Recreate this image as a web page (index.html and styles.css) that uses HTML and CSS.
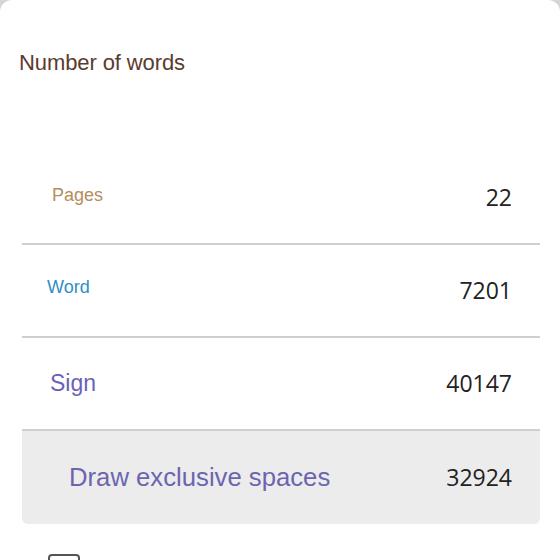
FILE: index.html
```html
<!DOCTYPE html>
<html>
<head>
<meta charset="utf-8">
<link rel="stylesheet" href="styles.css">
</head>
<body>
<div class="dialog">
  <h1 class="title">Number of words</h1>
  <div class="stats">
    <div class="row">
      <span class="label pages">Pages</span>
      <span class="num">22</span>
    </div>
    <div class="row">
      <span class="label word">Word</span>
      <span class="num">7201</span>
    </div>
    <div class="row">
      <span class="label sign">Sign</span>
      <span class="num">40147</span>
    </div>
    <div class="row shaded">
      <span class="label draw">Draw exclusive spaces</span>
      <span class="num">32924</span>
    </div>
  </div>
  <label class="check">
    <span class="box"></span>
    <span class="check-text">Include textboxes, footnotes and endnotes</span>
  </label>
</div>
</body>
</html>
```

FILE: styles.css
```css
html {
  background: #d6d6d6;
}
body {
  margin: 0;
  font-family: "Liberation Sans", Arial, sans-serif;
  height: 560px;
  overflow: hidden;
}
.dialog {
  background: #ffffff;
  border-radius: 12px 12px 0 0;
  height: 600px;
  padding-top: 50px;
  box-sizing: border-box;
}
.title {
  margin: 0 0 0 19px;
  font-size: 22px;
  font-weight: normal;
  line-height: 26px;
  height: 26px;
  color: #5b3b2e;
  letter-spacing: -0.1px;
}
.stats {
  margin: 76px 20px 0 22px;
}
.row {
  height: 91px;
  border-bottom: 2px solid #cfcfcf;
  display: flex;
  align-items: center;
  justify-content: space-between;
  padding-right: 28px;
}
.row.shaded {
  border-bottom: none;
  background: #ececec;
  height: 93px;
  border-radius: 0 0 6px 6px;
}
.label {
  line-height: 1;
}
.pages {
  font-size: 18px;
  color: #b58e5e;
  padding-left: 30px;
  margin-top: -6px;
}
.word {
  font-size: 18px;
  color: #2f8fc8;
  padding-left: 25px;
  margin-top: -8px;
}
.sign {
  font-size: 23px;
  color: #6a62b5;
  padding-left: 28px;
}
.draw {
  font-size: 25.7px;
  color: #6b65b0;
  padding-left: 47px;
}
.num {
  font-family: "Open Sans", "Noto Sans", sans-serif;
  font-size: 23px;
  color: #222222;
  line-height: 1;
}
.check {
  display: flex;
  align-items: flex-start;
  gap: 26px;
  margin: 30px 0 0 48px;
}
.box {
  width: 28px;
  height: 28px;
  border: 2px solid #555555;
  border-radius: 4px;
  flex: none;
}
.check-text {
  font-size: 22px;
  color: #333333;
  margin-top: 4px;
}
```
